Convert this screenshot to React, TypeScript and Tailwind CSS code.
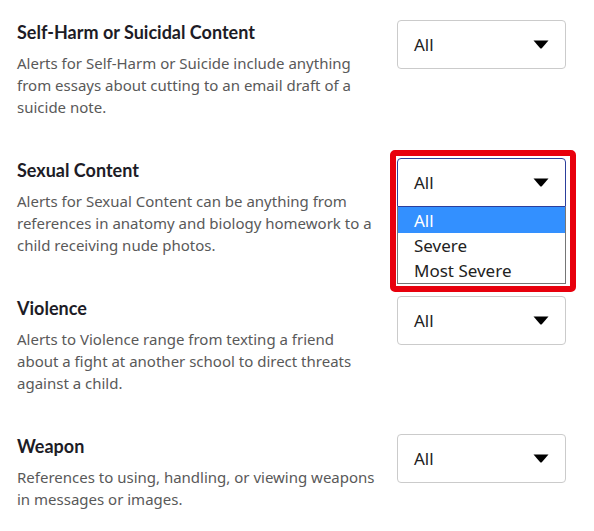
import { useState } from 'react';

const sections = [
  {
    title: 'Self-Harm or Suicidal Content',
    text: 'Alerts for Self-Harm or Suicide include anything from essays about cutting to an email draft of a suicide note.',
  },
  {
    title: 'Sexual Content',
    text: 'Alerts for Sexual Content can be anything from references in anatomy and biology homework to a child receiving nude photos.',
    open: true,
  },
  {
    title: 'Violence',
    text: 'Alerts to Violence range from texting a friend about a fight at another school to direct threats against a child.',
  },
  {
    title: 'Weapon',
    text: 'References to using, handling, or viewing weapons in messages or images.',
  },
];

const options = ['All', 'Severe', 'Most Severe'];

const Caret = () => (
  <svg width="16" height="9" viewBox="0 0 16 9" className="shrink-0">
    <path d="M0.5 0.5 H15.5 L8.8 8.2 Q8 9 7.2 8.2 Z" fill="#000" />
  </svg>
);

const Select = ({ open }: { open?: boolean }) => {
  const [value] = useState('All');
  return (
    <div className="relative w-[169px] shrink-0">
      <div
        className={
          'flex h-[49px] items-center justify-between rounded-[4px] border bg-white pl-4 pr-[16px] ' +
          (open ? 'border-[#2c3f9c] rounded-b-none' : 'border-[#cbcbcb]')
        }
      >
        <span className="text-[17px] text-[#222]">{value}</span>
        <Caret />
      </div>
      {open && (
        <>
          <div className="absolute left-0 top-[49px] z-10 w-[169px] border border-t-0 border-[#767676] bg-white">
            {options.map((o, i) => (
              <div
                key={o}
                className={
                  'flex items-center pl-4 text-[17px] leading-none ' +
                  (i === 0 ? 'h-[26px] bg-[#3390ff] text-white' : 'h-[25px] text-[#222]')
                }
              >
                {o}
              </div>
            ))}
          </div>
          <div className="pointer-events-none absolute -left-[7px] -top-[8px] z-20 h-[142px] w-[186px] rounded-[5px] border-[6px] border-[#e8000d]" />
        </>
      )}
    </div>
  );
};

export default function App() {
  return (
    <div className="h-[531px] w-[594px] overflow-hidden bg-white px-[17px] pt-[20px] font-['Segoe_UI','Noto_Sans',sans-serif]">
      {sections.map((s) => (
        <div key={s.title} className="flex h-[138px] justify-between pr-[11px]">
          <div className="w-[362px]">
            <h3 className="mt-[1px] font-['Lato',sans-serif] text-[18px] font-bold leading-[22px] text-[#1d1c26]">
              {s.title}
            </h3>
            <p className="mt-[9px] text-[15px] leading-[22px] text-[#595959]">{s.text}</p>
          </div>
          <Select open={s.open} />
        </div>
      ))}
    </div>
  );
}
